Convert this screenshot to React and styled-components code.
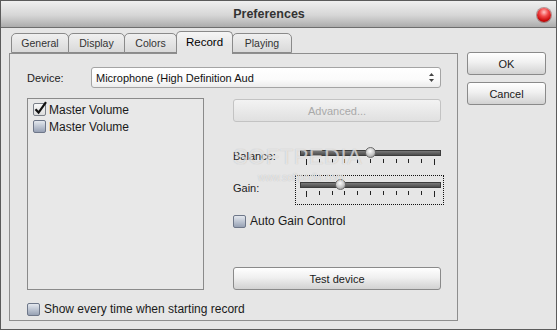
import React from 'react';
import styled, { createGlobalStyle } from 'styled-components';

const Global = createGlobalStyle`
  html, body { margin: 0; padding: 0; background: #e6e6e6; }
  body { font-family: "Liberation Sans", Arial, sans-serif; color: #222; }
  * { box-sizing: border-box; }
`;

const Window = styled.div`
  width: 557px;
  height: 330px;
  border: 1px solid #5b5b5b;
  background: #e6e6e6;
  display: flex;
  flex-direction: column;
  overflow: hidden;
`;

const TitleBar = styled.div`
  flex: none;
  height: 27px;
  border-bottom: 1px solid #6e6e6e;
  background: linear-gradient(#f0f0f0, #d6d6d6 55%, #acacac);
  display: flex;
  align-items: center;
  padding-right: 5px;
`;

const Title = styled.div`
  flex: 1;
  text-align: center;
  font-size: 12.5px;
  font-weight: bold;
  color: #333;
`;

const CloseBall = styled.div`
  width: 14px;
  height: 14px;
  border-radius: 50%;
  margin-top: 1px;
  background: radial-gradient(circle at 50% 30%, #ffc4c4 0%, #f24a4a 35%, #c80a0a 70%, #7a0000 100%);
  box-shadow: 0 0 0 1px rgba(90, 0, 0, 0.35);
`;

const Body = styled.div`
  flex: 1;
  display: flex;
  padding: 3px 10px 8px 8px;
  gap: 9px;
`;

const LeftCol = styled.div`
  width: 449px;
  display: flex;
  flex-direction: column;
`;

const TabStrip = styled.div`
  flex: none;
  height: 22px;
  display: flex;
  align-items: flex-end;
  padding-left: 2px;
`;

const Tab = styled.div`
  width: ${p => p.$w}px;
  height: ${p => (p.$active ? 23 : 20)}px;
  margin-left: ${p => (p.$first ? 0 : -1)}px;
  margin-bottom: ${p => (p.$active ? -1 : 0)}px;
  border: 1px solid #8a8a8a;
  border-bottom: ${p => (p.$active ? 'none' : '1px solid #8a8a8a')};
  border-radius: 5px 5px 0 0;
  background: ${p => (p.$active
    ? 'linear-gradient(#f6f6f6, #e6e6e6 60%)'
    : 'linear-gradient(#f0f0f0, #d9d9d9)')};
  position: ${p => (p.$active ? 'relative' : 'static')};
  z-index: ${p => (p.$active ? 1 : 0)};
  display: flex;
  align-items: center;
  justify-content: center;
  padding-bottom: ${p => (p.$active ? 3 : 0)}px;
  font-size: ${p => (p.$active ? 11.5 : 10.5)}px;
  color: ${p => (p.$active ? '#000' : '#333')};
`;

const Panel = styled.div`
  flex: 1;
  border: 1px solid #8e8e8e;
  padding: 13px 16px 4px 17px;
  display: flex;
  flex-direction: column;
`;

const DeviceRow = styled.div`
  height: 21px;
  display: flex;
  align-items: center;
`;

const FieldLabel = styled.div`
  width: ${p => p.$w}px;
  flex: none;
  font-size: 11px;
  color: #222;
  padding-top: ${p => p.$pt || 0}px;
`;

const Select = styled.div`
  flex: 1;
  height: 21px;
  border: 1px solid #a4a4a4;
  border-radius: 3px;
  background: linear-gradient(#ffffff, #fbfbfb 60%, #ececec);
  display: flex;
  align-items: center;
  justify-content: space-between;
  padding: 0 5px 0 4px;
  font-size: 11px;
  color: #111;
`;

const MainRow = styled.div`
  margin-top: 10px;
  height: 192px;
  display: flex;
  gap: 29px;
`;

const ListBox = styled.div`
  width: 177px;
  flex: none;
  border: 1px solid #8a8a8a;
  background: #e8e8e8;
  padding: 2px 5px;
  display: flex;
  flex-direction: column;
`;

const CheckRow = styled.div`
  height: ${p => p.$h || 17}px;
  margin-top: ${p => p.$mt || 0}px;
  display: flex;
  align-items: center;
  gap: ${p => p.$gap || 3}px;
  font-size: 12px;
  color: #1a1a1a;
`;

const Box = styled.span`
  position: relative;
  flex: none;
  width: 13px;
  height: 13px;
  border: 1px solid ${p => (p.$checked ? '#7a7f88' : '#6e7789')};
  border-radius: 2px;
  background: ${p => (p.$checked
    ? 'linear-gradient(#fafafa, #dcdcdc)'
    : 'linear-gradient(#e4e8ee, #b9c1cf 55%, #97a1b4)')};
`;

const CheckMark = styled.svg`
  position: absolute;
  left: 0px;
  top: -3px;
  overflow: visible;
`;

const RightCol = styled.div`
  flex: 1;
  position: relative;
  display: flex;
  flex-direction: column;
`;

const Button = styled.div`
  height: 23px;
  width: ${p => (p.$w ? `${p.$w}px` : 'auto')};
  margin-top: ${p => (p.$auto ? 'auto' : `${p.$mt || 0}px`)};
  border: 1px solid ${p => (p.$disabled ? '#c3c3c3' : '#8a8a8a')};
  border-radius: 3px;
  background: ${p => (p.$disabled
    ? 'linear-gradient(#f3f3f3, #e0e0e0)'
    : 'linear-gradient(#ffffff, #f0f0f0 45%, #d2d2d2)')};
  display: flex;
  align-items: center;
  justify-content: center;
  font-size: 11px;
  color: ${p => (p.$disabled ? '#a9a9a9' : '#1a1a1a')};
`;

const SliderRow = styled.div`
  margin-top: ${p => p.$mt}px;
  height: 30px;
  display: flex;
`;

const SliderBox = styled.div`
  position: relative;
  flex: none;
  width: 149px;
  height: 30px;
  margin-right: -3px;
  border: 1px dotted ${p => (p.$focus ? '#111' : 'transparent')};
  padding: 6px 2px 0 4px;
`;

const Track = styled.div`
  height: 6px;
  border: 1px solid #3d3d3d;
  background: linear-gradient(#7a7a7a, #4c4c4c);
`;

const Ticks = styled.div`
  margin: 3px 6px 0 6px;
  display: flex;
  justify-content: space-between;
  align-items: flex-start;
`;

const Tick = styled.span`
  width: 1px;
  height: ${p => (p.$long ? 6 : 4)}px;
  background: #222;
`;

const Thumb = styled.div`
  position: absolute;
  top: 3px;
  left: ${p => p.$left}px;
  width: 11px;
  height: 11px;
  border-radius: 50%;
  border: 1px solid #6a6a6a;
  background: radial-gradient(circle at 45% 35%, #fbfbfb, #c4c4c4 55%, #858585);
`;

const Watermark = styled.div`
  position: absolute;
  left: ${p => p.$x}px;
  top: ${p => p.$y}px;
  font-size: ${p => p.$size}px;
  color: rgba(255, 255, 255, 0.6);
  text-shadow: 0 0 1px rgba(120, 120, 120, 0.45);
  letter-spacing: ${p => p.$ls || 0}px;
  pointer-events: none;
  white-space: nowrap;
`;

const ButtonCol = styled.div`
  width: 79px;
  margin-top: 21px;
  display: flex;
  flex-direction: column;
`;

function CheckBox({ checked }) {
  return (
    <Box $checked={checked}>
      {checked && (
        <CheckMark width="13" height="14" viewBox="0 0 13 14">
          <path d="M1.5 8.2 L4.6 11.6 L12 1.2" fill="none" stroke="#111" strokeWidth="2.2" strokeLinejoin="miter" />
        </CheckMark>
      )}
    </Box>
  );
}

function Slider({ label, value, focus }) {
  const trackWidth = 141;
  const left = 4 + Math.round(trackWidth * value) - 6;
  return (
    <>
      <FieldLabel $w={62} $pt={7}>{label}</FieldLabel>
      <SliderBox $focus={focus}>
        <Track />
        <Ticks>
          {Array.from({ length: 11 }).map((_, i) => (
            <Tick key={i} $long={i === 0 || i === 10} />
          ))}
        </Ticks>
        <Thumb $left={left} />
      </SliderBox>
    </>
  );
}

const tabs = [
  { name: 'General', w: 58 },
  { name: 'Display', w: 57 },
  { name: 'Colors', w: 53 },
  { name: 'Record', w: 57, active: true },
  { name: 'Playing', w: 60 },
];

export default function App() {
  return (
    <>
      <Global />
      <Window>
        <TitleBar>
          <Title>Preferences</Title>
          <CloseBall />
        </TitleBar>
        <Body>
          <LeftCol>
            <TabStrip>
              {tabs.map((t, i) => (
                <Tab key={t.name} $w={t.w} $active={t.active} $first={i === 0}>{t.name}</Tab>
              ))}
            </TabStrip>
            <Panel>
              <DeviceRow>
                <FieldLabel $w={64}>Device:</FieldLabel>
                <Select>
                  <span>Microphone (High Definition Aud</span>
                  <svg width="7" height="11" viewBox="0 0 7 11">
                    <path d="M3.5 1 L6 4 L1 4 Z" fill="#444" />
                    <path d="M3.5 10 L6 7 L1 7 Z" fill="#444" />
                  </svg>
                </Select>
              </DeviceRow>
              <MainRow>
                <ListBox>
                  <CheckRow><CheckBox checked />Master Volume</CheckRow>
                  <CheckRow><CheckBox />Master Volume</CheckRow>
                </ListBox>
                <RightCol>
                  <Button $disabled $mt={1}>Advanced...</Button>
                  <SliderRow $mt={21}>
                    <Slider label="Balance:" value={0.5} />
                  </SliderRow>
                  <SliderRow $mt={2}>
                    <Slider label="Gain:" value={0.29} focus />
                  </SliderRow>
                  <CheckRow $h={14} $mt={9} $gap={4}><CheckBox />Auto Gain Control</CheckRow>
                  <Button $auto>Test device</Button>
                  <Watermark $x={0} $y={46} $size={22} $ls={0.5}>SOFTPEDIA</Watermark>
                  <Watermark $x={25} $y={74} $size={10}>www.softpedia.com</Watermark>
                </RightCol>
              </MainRow>
              <CheckRow $h={14} $mt={12} $gap={4}><CheckBox />Show every time when starting record</CheckRow>
            </Panel>
          </LeftCol>
          <ButtonCol>
            <Button>OK</Button>
            <Button $mt={7}>Cancel</Button>
          </ButtonCol>
        </Body>
      </Window>
    </>
  );
}
